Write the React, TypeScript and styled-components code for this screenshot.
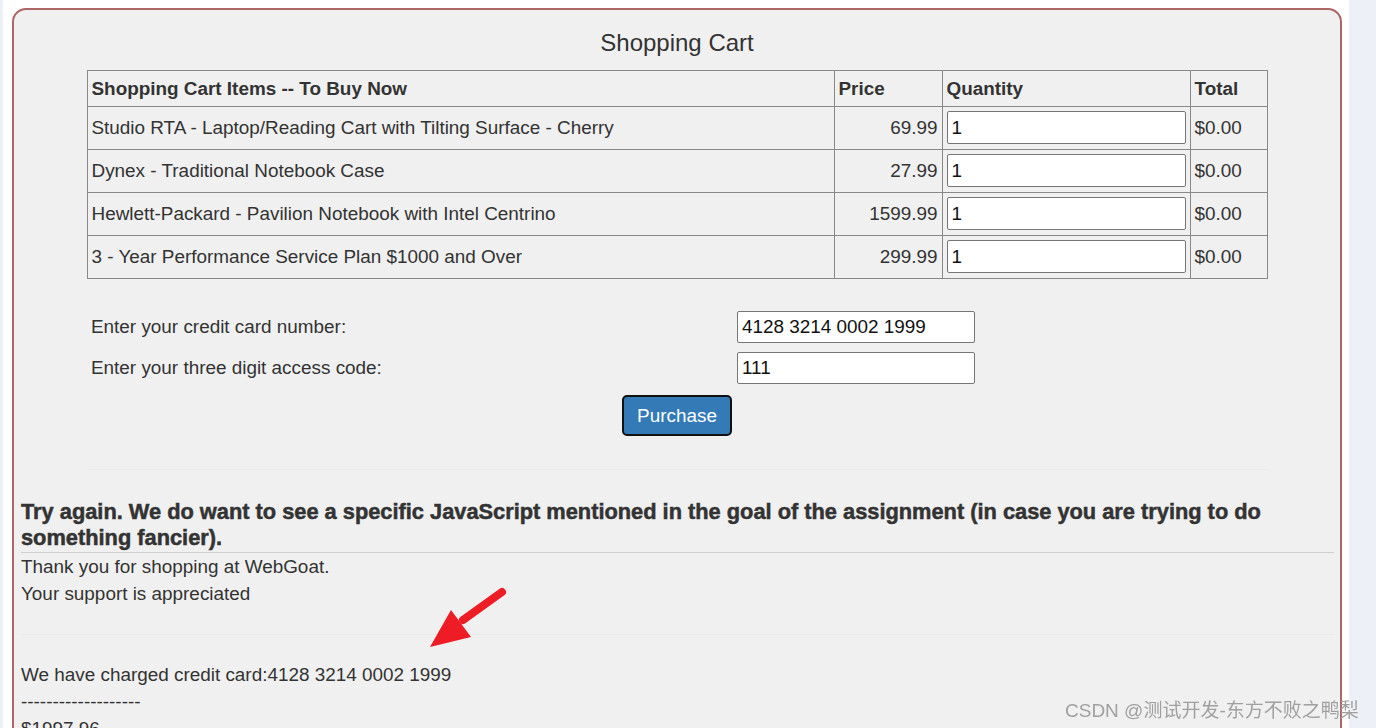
import styled, { createGlobalStyle } from 'styled-components';

const GlobalStyle = createGlobalStyle`
    body {
        margin: 0;
        background-color: #eef0f7;
        font-family: "Liberation Sans", Arial, sans-serif;
        color: #333;
    }
`;

const Page = styled.div`
    position: relative;
    width: 1346px;
    margin-left: 3px;
    min-height: 100vh;
    background-color: #fff;
    padding: 8px 7px 0 9px;
    box-sizing: border-box;
    overflow: hidden;
    height: 728px;
`;

const Panel = styled.div`
    border: 2px solid #ad6664;
    border-radius: 14px;
    background-color: #f0f0f0;
    min-height: 900px;
    h2 {
        margin: 19px 0 13px 0;
        font-size: 24px;
        font-weight: normal;
        line-height: 28px;
        text-align: center;
    }
`;

const CartTable = styled.table`
    margin: 0 auto;
    width: 1180px;
    table-layout: fixed;
    border-collapse: collapse;
    font-size: 18.9px;
    th, td {
        border: 1px solid #888;
        text-align: left;
    }
    th {
        padding: 6px 4px;
        line-height: 23px;
        font-weight: bold;
    }
    td {
        padding: 4px 4px 5px 4px;
        line-height: 22px;
    }
    .price {
        text-align: right;
    }
`;

const QtyInput = styled.input`
    display: block;
    width: 100%;
    height: 33px;
    box-sizing: border-box;
    border: 1px solid #767676;
    border-radius: 2px;
    padding: 0 4px;
    font-family: inherit;
    font-size: 18.9px;
    color: #111;
    background: #fff;
`;

const PayForm = styled.div`
    width: 1180px;
    margin: 32px auto 0 auto;
    display: grid;
    grid-template-columns: 650px 238px;
    row-gap: 9px;
    align-items: center;
    font-size: 18.9px;
    label {
        padding-left: 4px;
    }
`;

const CardInput = styled(QtyInput)`
    height: 32px;
`;

const ButtonRow = styled.div`
    display: flex;
    justify-content: center;
    margin-top: 11px;
`;

const PurchaseButton = styled.button`
    width: 110px;
    height: 41px;
    background-color: #337ab7;
    color: #fff;
    border: 2px solid #111;
    border-radius: 5px;
    font-family: inherit;
    font-size: 18.9px;
    cursor: pointer;
`;

const FaintLine = styled.div<{ $wide?: boolean }>`
    height: 1px;
    background-color: #e9e9e9;
    margin: ${(p) => (p.$wide ? '27px 6px 26px 7px' : '33px auto 29px auto')};
    width: ${(p) => (p.$wide ? 'auto' : '1180px')};
`;

const Messages = styled.div`
    padding: 0 6px 0 7px;
    h4 {
        margin: 0;
        font-size: 21.8px;
        line-height: 26px;
        font-weight: bold;
        -webkit-text-stroke: 0.5px #333;
        padding-bottom: 1px;
        border-bottom: 1px solid #cfcfcf;
    }
    p {
        margin: 0;
        font-size: 18.9px;
        line-height: 27px;
    }
`;

const Arrow = styled.svg`
    position: absolute;
    left: 420px;
    top: 580px;
`;

const Watermark = styled.div`
    position: fixed;
    left: 1065px;
    top: 695px;
    font-family: "Liberation Sans", "Noto Sans CJK SC", sans-serif;
    font-size: 19px;
    color: #a0a0a0;
    white-space: nowrap;
`;

const items = [
    { name: 'Studio RTA - Laptop/Reading Cart with Tilting Surface - Cherry', price: '69.99' },
    { name: 'Dynex - Traditional Notebook Case', price: '27.99' },
    { name: 'Hewlett-Packard - Pavilion Notebook with Intel Centrino', price: '1599.99' },
    { name: '3 - Year Performance Service Plan $1000 and Over', price: '299.99' },
];

const App = () => {
    return (
        <>
            <GlobalStyle />
            <Page>
                <Panel>
                    <h2>Shopping Cart</h2>
                    <CartTable>
                        <colgroup>
                            <col style={{ width: 747 }} />
                            <col style={{ width: 108 }} />
                            <col style={{ width: 248 }} />
                            <col style={{ width: 77 }} />
                        </colgroup>
                        <thead>
                            <tr>
                                <th>Shopping Cart Items -- To Buy Now</th>
                                <th>Price</th>
                                <th>Quantity</th>
                                <th>Total</th>
                            </tr>
                        </thead>
                        <tbody>
                            {
                                items.map((item) => {
                                    return (
                                        <tr key={item.name}>
                                            <td>{item.name}</td>
                                            <td className='price'>{item.price}</td>
                                            <td><QtyInput type='text' defaultValue='1' /></td>
                                            <td>$0.00</td>
                                        </tr>
                                    )
                                })
                            }
                        </tbody>
                    </CartTable>
                    <PayForm>
                        <label>Enter your credit card number:</label>
                        <CardInput type='text' defaultValue='4128 3214 0002 1999' />
                        <label>Enter your three digit access code:</label>
                        <CardInput type='text' defaultValue='111' />
                    </PayForm>
                    <ButtonRow>
                        <PurchaseButton>Purchase</PurchaseButton>
                    </ButtonRow>
                    <FaintLine />
                    <Messages>
                        <h4>Try again. We do want to see a specific JavaScript mentioned in the goal of the assignment (in case you are trying to do something fancier).</h4>
                        <p>Thank you for shopping at WebGoat.</p>
                        <p>Your support is appreciated</p>
                    </Messages>
                    <FaintLine $wide />
                    <Messages>
                        <p>We have charged credit card:4128 3214 0002 1999</p>
                        <p>-------------------</p>
                        <p>$1997.96</p>
                    </Messages>
                </Panel>
                <Arrow width='90' height='75' viewBox='0 0 90 75'>
                    <line x1='79' y1='12' x2='40' y2='40' stroke='#ee1c25' strokeWidth='8' strokeLinecap='round' />
                    <polygon points='28,30 48,57 7,67' fill='#ee1c25' />
                </Arrow>
            </Page>
            <Watermark>CSDN @测试开发-东方不败之鸭梨</Watermark>
        </>
    );
}
export default App;
